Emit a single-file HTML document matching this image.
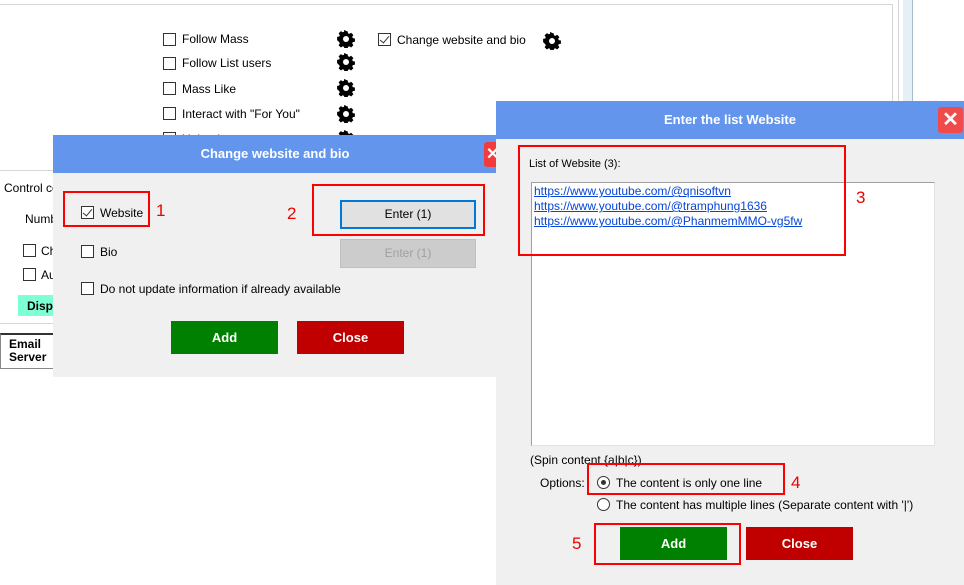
<!DOCTYPE html>
<html><head><meta charset="utf-8"><style>
*{box-sizing:border-box;margin:0;padding:0}
body{width:964px;height:585px;background:#fff;position:relative;overflow:hidden;font-family:"Liberation Sans",sans-serif;font-size:12px;color:#000}
.a{position:absolute}
.cb{position:absolute;width:13px;height:13px;border:1px solid #333;background:#fff}
.cb.on::after{content:"";position:absolute;left:3px;top:0px;width:4px;height:8px;border:solid #333;border-width:0 1.5px 1.5px 0;transform:rotate(40deg)}
.t{position:absolute;white-space:nowrap}
.gear{position:absolute;width:18px;height:18px}
.red{position:absolute;border:2px solid #f00}
.num{position:absolute;color:#e00;font-size:17px}
.btn{position:absolute;color:#fff;font-weight:bold;font-size:13px;text-align:center}
.title{position:absolute;background:#6495ed;color:#fff;font-weight:bold;font-size:13px;text-align:center}
a{color:#0645d8;text-decoration:underline}
</style></head><body>
<svg width="0" height="0" style="position:absolute"><defs><g id="g"><path d="M9 1.5l1.6.2.4 2.1 1.3.6 1.8-1.2 2.3 2.3-1.2 1.8.6 1.3 2.1.4v3.2l-2.1.4-.6 1.3 1.2 1.8-2.3 2.3-1.8-1.2-1.3.6-.4 2.1H7.4l-.4-2.1-1.3-.6-1.8 1.2-2.3-2.3 1.2-1.8-.6-1.3L.1 10.6V7.4l2.1-.4.6-1.3-1.2-1.8 2.3-2.3 1.8 1.2 1.3-.6.4-2.1z" transform="translate(0 -0.5)" fill="#000"/><circle cx="9" cy="9" r="3" fill="#fff"/></g></defs></svg>
<div class="a" style="left:0;top:4px;width:892px;height:1px;background:#d6d6d6"></div>
<div class="a" style="left:892px;top:4px;width:1px;height:581px;background:#d6d6d6"></div>
<div class="a" style="left:898px;top:0;width:1px;height:585px;background:#d6d6d6"></div>
<div class="a" style="left:903px;top:0;width:10px;height:585px;background:#e4f0f6;border-right:1px solid #a8bccc"></div>

<div class="cb" style="left:163px;top:33px"></div><div class="t" style="left:182px;top:32px">Follow Mass</div>
<div class="cb" style="left:163px;top:57px"></div><div class="t" style="left:182px;top:56px">Follow List users</div>
<div class="cb" style="left:163px;top:82px"></div><div class="t" style="left:182px;top:82px">Mass Like</div>
<div class="cb" style="left:163px;top:107px"></div><div class="t" style="left:182px;top:107px">Interact with "For You"</div>
<div class="cb" style="left:163px;top:132px"></div><div class="t" style="left:182px;top:132px">Upload</div>
<svg class="gear" style="left:337px;top:30px"><use href="#g"/></svg>
<svg class="gear" style="left:337px;top:53px"><use href="#g"/></svg>
<svg class="gear" style="left:337px;top:79px"><use href="#g"/></svg>
<svg class="gear" style="left:337px;top:105px"><use href="#g"/></svg>
<svg class="gear" style="left:337px;top:130px"><use href="#g"/></svg>
<div class="cb on" style="left:378px;top:33px"></div><div class="t" style="left:397px;top:33px">Change website and bio</div>
<svg class="gear" style="left:543px;top:32px"><use href="#g"/></svg>

<div class="a" style="left:0;top:170px;width:60px;height:1px;background:#d6d6d6"></div>
<div class="t" style="left:4px;top:181px">Control ce</div>
<div class="t" style="left:25px;top:212px">Numb</div>
<div class="cb" style="left:23px;top:244px"></div><div class="t" style="left:41px;top:244px">Ch</div>
<div class="cb" style="left:23px;top:268px"></div><div class="t" style="left:41px;top:268px">Au</div>
<div class="a" style="left:18px;top:295px;width:40px;height:21px;background:#7fffd4"></div><div class="t" style="left:27px;top:299px;font-weight:bold">Disp</div>
<div class="a" style="left:0;top:323px;width:60px;height:1px;background:#d6d6d6"></div>
<div class="a" style="left:0;top:333px;width:60px;height:36px;border-top:2px solid #333;border-left:1px solid #888;border-bottom:1px solid #888"></div>
<div class="t" style="left:9px;top:338px;font-weight:bold;line-height:13px">Email<br>Server</div>

<div class="a" style="left:53px;top:135px;width:444px;height:242px;background:#f0f0f0"></div>
<div class="title" style="left:53px;top:135px;width:444px;height:38px;line-height:38px">Change website and bio</div>
<div class="a" style="left:484px;top:142px;width:13px;height:25px;background:#f03c3c;border-radius:3px 0 0 3px;color:#fff;font-weight:bold;font-size:16px;line-height:25px;padding-left:2px;overflow:hidden">✕</div>
<div class="cb on" style="left:81px;top:206px"></div><div class="t" style="left:100px;top:206px">Website</div>
<div class="red" style="left:63px;top:191px;width:87px;height:36px"></div>
<div class="num" style="left:156px;top:201px">1</div>
<div class="num" style="left:287px;top:204px">2</div>
<div class="red" style="left:312px;top:184px;width:173px;height:52px"></div>
<div class="a" style="left:340px;top:200px;width:136px;height:29px;background:#e1e1e1;border:2px solid #0078d7;text-align:center;line-height:25px">Enter (1)</div>
<div class="a" style="left:340px;top:239px;width:136px;height:29px;background:#cccccc;border:1px solid #bfbfbf;text-align:center;line-height:27px;color:#a0a0a0">Enter (1)</div>
<div class="cb" style="left:81px;top:245px"></div><div class="t" style="left:100px;top:245px">Bio</div>
<div class="cb" style="left:81px;top:282px"></div><div class="t" style="left:100px;top:282px">Do not update information if already available</div>
<div class="btn" style="left:171px;top:321px;width:107px;height:33px;line-height:33px;background:#008000">Add</div>
<div class="btn" style="left:297px;top:321px;width:107px;height:33px;line-height:33px;background:#c00000">Close</div>

<div class="a" style="left:496px;top:101px;width:468px;height:484px;background:#f0f0f0"></div>
<div class="title" style="left:496px;top:101px;width:468px;height:38px;line-height:38px">Enter the list Website</div>
<div class="a" style="left:938px;top:107px;width:25px;height:26px;background:#f04a4a;border-radius:3px;color:#fff;font-size:20px;font-weight:bold;text-align:center;line-height:26px">✕</div>
<div class="t" style="left:529px;top:158px;font-size:11px">List of Website (3):</div>
<div class="a" style="left:531px;top:182px;width:404px;height:264px;background:#fff;border:1px solid #a0a0a0;border-bottom-color:#e3e3e3;border-right-color:#e3e3e3"></div>
<div class="t" style="left:534px;top:184px;line-height:15px"><a>https://www.youtube.com/@qnisoftvn</a><br><a>https://www.youtube.com/@tramphung1636</a><br><a>https://www.youtube.com/@PhanmemMMO-vg5fw</a></div>
<div class="red" style="left:518px;top:145px;width:328px;height:111px"></div>
<div class="num" style="left:856px;top:188px">3</div>
<div class="t" style="left:530px;top:453px">(Spin content {a|b|c})</div>
<div class="t" style="left:540px;top:476px">Options:</div>
<div class="a" style="left:597px;top:476px;width:13px;height:13px;border:1px solid #333;border-radius:50%;background:#fff"><div class="a" style="left:3px;top:3px;width:5px;height:5px;border-radius:50%;background:#333"></div></div>
<div class="t" style="left:616px;top:476px">The content is only one line</div>
<div class="red" style="left:587px;top:463px;width:198px;height:32px"></div>
<div class="num" style="left:791px;top:473px">4</div>
<div class="a" style="left:597px;top:498px;width:13px;height:13px;border:1px solid #333;border-radius:50%;background:#fff"></div>
<div class="t" style="left:616px;top:498px">The content has multiple lines (Separate content with '|')</div>
<div class="num" style="left:572px;top:534px">5</div>
<div class="red" style="left:594px;top:523px;width:147px;height:42px"></div>
<div class="btn" style="left:620px;top:527px;width:107px;height:33px;line-height:33px;background:#008000">Add</div>
<div class="btn" style="left:746px;top:527px;width:107px;height:33px;line-height:33px;background:#c00000">Close</div>
</body></html>
